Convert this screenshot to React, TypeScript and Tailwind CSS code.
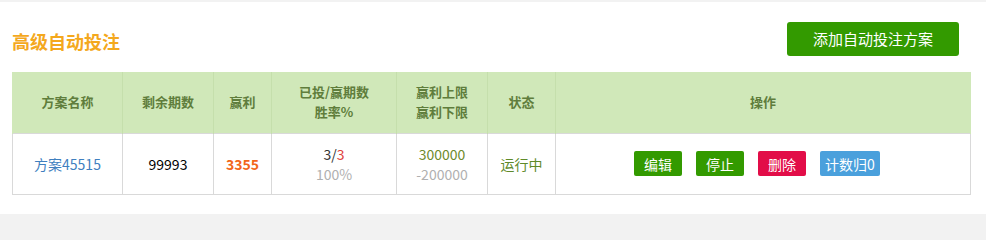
import React from 'react';

const font = { fontFamily: '"Microsoft YaHei", "Noto Sans CJK SC", "Noto Sans", sans-serif' };

const App = () => {
  const cols = [110, 91, 58, 125, 91, 68, 415];
  const heads: React.ReactNode[] = [
    '方案名称',
    '剩余期数',
    '赢利',
    <>已投/赢期数<br />胜率%</>,
    <>赢利上限<br />赢利下限</>,
    '状态',
    '操作',
  ];

  return (
    <div className="min-h-screen bg-[#f2f2f2] pt-[2px]" style={font}>
      <div className="h-[212px] bg-white pl-3">
        <div className="flex h-[70px] w-[958px] items-start">
          <h2 className="mt-[27px] text-[18px] font-bold leading-[24px] text-[#f4a81d]">高级自动投注</h2>
          <button className="ml-auto mr-[11px] mt-[20px] h-[34px] w-[172px] rounded-[3px] bg-[#339a00] text-[15px] text-white">
            添加自动投注方案
          </button>
        </div>
        <table className="w-[958px] table-fixed border-collapse text-center">
          <colgroup>
            {cols.map((w, i) => (
              <col key={i} style={{ width: w }} />
            ))}
          </colgroup>
          <thead>
            <tr className="h-[61px] bg-[#d0e8b9]">
              {heads.map((h, i) => (
                <th
                  key={i}
                  className="border-x border-[#c5dfac] text-[13px] font-bold leading-[20px] text-[#5f7d3c] first:border-l-[#d0e8b9] last:border-r-[#d0e8b9]"
                >
                  {h}
                </th>
              ))}
            </tr>
          </thead>
          <tbody>
            <tr className="h-[61px] text-[14px] leading-[20px]">
              <td className="border border-[#d9d9d9] text-[#3f7fbf]">方案45515</td>
              <td className="border border-[#d9d9d9] text-black">99993</td>
              <td className="border border-[#d9d9d9] font-bold text-[#f2661b]">3355</td>
              <td className="border border-[#d9d9d9]">
                <div className="text-[#333]">
                  3/<span className="text-[#e0403c]">3</span>
                </div>
                <div className="text-[#b0b0b0]">100%</div>
              </td>
              <td className="border border-[#d9d9d9]">
                <div className="text-[#6e8a2c]">300000</div>
                <div className="text-[#b0b0b0]">-200000</div>
              </td>
              <td className="border border-[#d9d9d9] text-[#5f8a2a]">运行中</td>
              <td className="border border-[#d9d9d9]">
                <div className="flex justify-center gap-[14px] pr-[12px]">
                  <button className="h-[25px] w-[48px] rounded-[2px] bg-[#339a00] text-[14px] text-white">编辑</button>
                  <button className="h-[25px] w-[48px] rounded-[2px] bg-[#339a00] text-[14px] text-white">停止</button>
                  <button className="h-[25px] w-[48px] rounded-[2px] bg-[#e20d48] text-[14px] text-white">删除</button>
                  <button className="h-[25px] w-[60px] rounded-[2px] bg-[#4aa0dc] text-[14px] text-white">计数归0</button>
                </div>
              </td>
            </tr>
          </tbody>
        </table>
      </div>
    </div>
  );
};

export default App;
